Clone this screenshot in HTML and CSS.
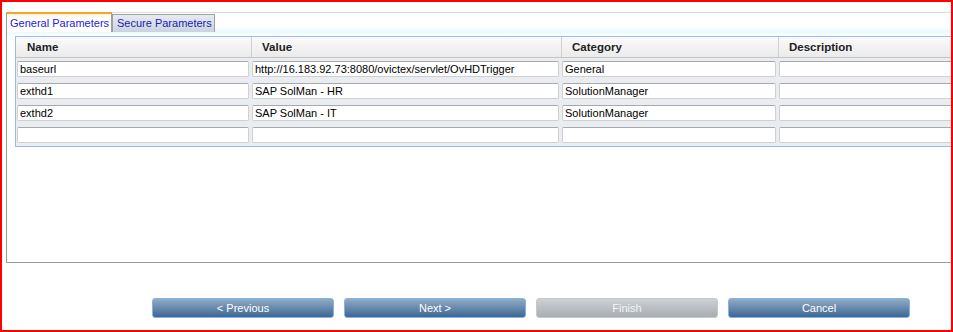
FILE: index.html
```html
<!DOCTYPE html>
<html lang="en">
<head>
    <meta charset="UTF-8">
    <title>Parameters</title>
    <link rel="stylesheet" href="styles.css">
</head>
<body>
    <div class="frame">
        <div class="panel">
            <!-- Tabs -->
            <div class="tabs">
                <div class="tab active">General Parameters</div>
                <div class="tab">Secure Parameters</div>
            </div>

            <div class="tab-content">
                <div class="grid">
                    <div class="grid-head">
                        <div class="th">Name</div>
                        <div class="th">Value</div>
                        <div class="th">Category</div>
                        <div class="th">Description</div>
                    </div>
                    <div class="grid-row">
                        <div class="td"><input type="text" value="baseurl"></div>
                        <div class="td"><input type="text" value="http://16.183.92.73:8080/ovictex/servlet/OvHDTrigger"></div>
                        <div class="td"><input type="text" value="General"></div>
                        <div class="td"><input type="text" value=""></div>
                    </div>
                    <div class="grid-row">
                        <div class="td"><input type="text" value="exthd1"></div>
                        <div class="td"><input type="text" value="SAP SolMan - HR"></div>
                        <div class="td"><input type="text" value="SolutionManager"></div>
                        <div class="td"><input type="text" value=""></div>
                    </div>
                    <div class="grid-row">
                        <div class="td"><input type="text" value="exthd2"></div>
                        <div class="td"><input type="text" value="SAP SolMan - IT"></div>
                        <div class="td"><input type="text" value="SolutionManager"></div>
                        <div class="td"><input type="text" value=""></div>
                    </div>
                    <div class="grid-row">
                        <div class="td"><input type="text" value=""></div>
                        <div class="td"><input type="text" value=""></div>
                        <div class="td"><input type="text" value=""></div>
                        <div class="td"><input type="text" value=""></div>
                    </div>
                </div>
            </div>
        </div>

        <!-- Wizard buttons -->
        <div class="buttons">
            <button type="button">&lt; Previous</button>
            <button type="button">Next &gt;</button>
            <button type="button" class="disabled">Finish</button>
            <button type="button">Cancel</button>
        </div>
    </div>
</body>
</html>
```

FILE: styles.css
```css
body {
    margin: 0;
    padding: 0;
    font-family: "Liberation Sans", Arial, sans-serif;
    font-size: 11px;
    background: #fff;
}

.frame {
    box-sizing: border-box;
    width: 953px;
    height: 332px;
    border: 2px solid #ff0000;
    overflow: hidden;
}

/* Tab panel */
.panel {
    margin: 10px -60px 0 4px;
    height: 251px;
    box-sizing: border-box;
    border-top: 1px solid #dcdcdc;
    border-left: 1px solid #999;
    border-bottom: 1px solid #999;
    display: flex;
    flex-direction: column;
}

.tabs {
    display: flex;
    height: 19px;
    background: linear-gradient(to bottom, #fff 70%, #eafaff);
}

.tab {
    box-sizing: border-box;
    width: 103px;
    height: 18px;
    margin-top: 1px;
    padding: 0 4px;
    line-height: 17px;
    white-space: nowrap;
    color: #1c1cb4;
    border: 1px solid #a0a0a0;
    border-bottom: none;
    background: linear-gradient(to bottom, #e6ebf1, #c9d3df);
}

.tab.active {
    width: 105px;
    height: 20px;
    margin-top: -1px;
    padding-left: 3px;
    line-height: 19px;
    color: #2323e0;
    border: none;
    border-right: 1px solid #a0a0a0;
    border-top: 2px solid #f3a52b;
    background: linear-gradient(to bottom, #fff3e0, #fff 5px);
}

.tab-content {
    flex: 1;
    padding: 4px 0 0 8px;
    background: linear-gradient(to bottom, #eafaff, #fff 5px);
}

/* Grid */
.grid {
    border: 1px solid #99bce8;
    background: #e9ecf0;
}

.grid-head,
.grid-row {
    display: grid;
    grid-template-columns: 235px 310px 217px 1fr;
}

.grid-head {
    height: 20px;
    border-bottom: 1px solid #c4c4c4;
    background: linear-gradient(to bottom, #fafafa, #ebebeb);
}

.th {
    padding-left: 11px;
    line-height: 20px;
    font-size: 11.5px;
    font-weight: bold;
    color: #222;
    white-space: nowrap;
}

.th + .th {
    border-left: 1px solid #d0d0d0;
    padding-left: 10px;
}

.grid-row {
    height: 22px;
}

.td {
    padding: 3px 2px 0 1px;
}

.td input {
    box-sizing: border-box;
    display: block;
    width: 100%;
    height: 16px;
    margin: 0;
    padding: 0 2px;
    font-family: "Liberation Sans", Arial, sans-serif;
    font-size: 11px;
    color: #000;
    background: #fff;
    border: 1px solid #d0d0d0;
    border-top-color: #a9a9a9;
    border-radius: 2px;
    outline: none;
}

/* Buttons */
.buttons {
    display: flex;
    gap: 10px;
    padding-left: 150px;
    margin-top: 35px;
}

button {
    width: 182px;
    height: 20px;
    padding: 0;
    font-family: "Liberation Sans", Arial, sans-serif;
    font-size: 11px;
    color: #fff;
    border: 1px solid #7db6ea;
    border-radius: 3px;
    background: linear-gradient(to bottom, #91abc5, #3f6792);
    cursor: pointer;
}

button.disabled {
    color: #f2f4f6;
    border-color: #c6c9cc;
    background: linear-gradient(to bottom, #cdd1d5, #a8adb2);
    cursor: default;
}
```
